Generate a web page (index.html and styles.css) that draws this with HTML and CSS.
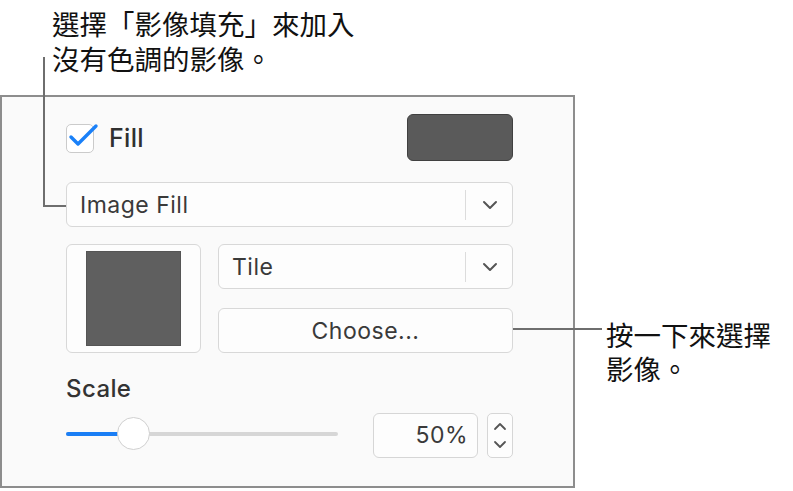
FILE: index.html
```html
<!DOCTYPE html>
<html lang="zh-Hant">
<head>
  <meta charset="UTF-8" />
  <meta name="viewport" content="width=device-width, initial-scale=1.0"/>
  <title>影像填充</title>
  <link rel="stylesheet" href="styles.css">
</head>
<body>
  <div class="figure">
    <p class="callout callout-top">選擇「影像填充」來加入<br>沒有色調的影像。</p>

    <div class="row">
      <div class="inspector">
        <div class="fill-row">
          <label class="check">
            <span class="check-box">
              <svg class="check-mark" width="34" height="26" viewBox="0 0 34 26">
                <path d="M5 14 L12 21 L30 3" fill="none" stroke="#1a80f8" stroke-width="3.4" stroke-linecap="round" stroke-linejoin="round"/>
              </svg>
            </span>
            <span class="check-label">Fill</span>
          </label>
          <div class="color-well"></div>
        </div>

        <div class="popup popup-wide">
          <span class="popup-text">Image Fill</span>
          <span class="popup-arrow">
            <svg width="16" height="10" viewBox="0 0 16 10"><path d="M2 2 L8 8 L14 2" fill="none" stroke="#555" stroke-width="2" stroke-linecap="round" stroke-linejoin="round"/></svg>
          </span>
        </div>

        <div class="media-row">
          <div class="image-well"><div class="image-swatch"></div></div>
          <div class="media-controls">
            <div class="popup">
              <span class="popup-text">Tile</span>
              <span class="popup-arrow">
                <svg width="16" height="10" viewBox="0 0 16 10"><path d="M2 2 L8 8 L14 2" fill="none" stroke="#555" stroke-width="2" stroke-linecap="round" stroke-linejoin="round"/></svg>
              </span>
            </div>
            <div class="button">Choose...</div>
          </div>
        </div>

        <div class="scale-label">Scale</div>
        <div class="scale-row">
          <div class="slider">
            <div class="slider-track"></div>
            <div class="slider-fill"></div>
            <div class="slider-knob"></div>
          </div>
          <div class="number-field">50%</div>
          <div class="stepper">
            <svg width="14" height="9" viewBox="0 0 14 9"><path d="M2 7 L7 2 L12 7" fill="none" stroke="#555" stroke-width="1.8" stroke-linecap="round" stroke-linejoin="round"/></svg>
            <svg width="14" height="9" viewBox="0 0 14 9"><path d="M2 2 L7 7 L12 2" fill="none" stroke="#555" stroke-width="1.8" stroke-linecap="round" stroke-linejoin="round"/></svg>
          </div>
        </div>
      </div>

      <p class="callout callout-side">按一下來選擇<br>影像。</p>
    </div>

    <!-- leader lines -->
    <div class="leader leader-top-v"></div>
    <div class="leader leader-top-h"></div>
    <div class="leader leader-side"></div>
  </div>
</body>
</html>
```

FILE: styles.css
```css
body {
  margin: 0;
  background: #fff;
  font-family: Inter, "Noto Sans CJK TC", sans-serif;
  color: #111;
}
.figure {
  position: relative;
  width: 793px;
  height: 491px;
}
.callout {
  margin: 0;
  font-family: "Noto Sans CJK TC", sans-serif;
  font-size: 27.5px;
  line-height: 35px;
  color: #111;
}
.callout-top {
  padding: 6px 0 0 52px;
  height: 95px;
  box-sizing: border-box;
}
.row {
  display: flex;
  align-items: flex-start;
}
.inspector {
  box-sizing: border-box;
  width: 575px;
  height: 393px;
  background: #fafafa;
  border: 2px solid #8d8d8d;
  padding: 17px 60px 0 64px;
}
.callout-side {
  margin: 222px 0 0 31px;
  line-height: 34px;
}

/* fill row */
.fill-row {
  display: flex;
  justify-content: space-between;
  align-items: center;
  height: 47px;
}
.check {
  display: flex;
  align-items: center;
}
.check-box {
  position: relative;
  box-sizing: border-box;
  width: 28px;
  height: 29px;
  background: #fff;
  border: 1.5px solid #cbcbcb;
  border-radius: 5px;
  margin-top: 1px;
}
.check-mark {
  position: absolute;
  left: -1.5px;
  top: -1.5px;
  overflow: visible;
}
.check-label {
  margin-left: 15px;
  font-size: 25px;
  font-weight: 500;
  letter-spacing: 0.3px;
  color: #303030;
}
.color-well {
  box-sizing: border-box;
  width: 106px;
  height: 47px;
  border-radius: 6px;
  border: 1px solid #404040;
  background: #5a5a5a;
}

/* popups and buttons */
.popup,
.button {
  box-sizing: border-box;
  height: 45px;
  background: #fdfdfd;
  border: 1.5px solid #d8d8d8;
  border-radius: 6px;
  font-size: 23px;
  letter-spacing: 0.5px;
  color: #3a3a3a;
}
.popup {
  display: flex;
  align-items: center;
}
.popup-wide {
  margin-top: 21px;
}
.popup-text {
  flex: 1;
  padding-left: 13px;
}
.popup-arrow {
  display: flex;
  align-items: center;
  justify-content: center;
  width: 46px;
  height: 30px;
  border-left: 1.5px solid #dcdcdc;
}
.popup-arrow svg {
  margin-left: 2px;
}
.button {
  display: flex;
  align-items: center;
  justify-content: center;
}

/* image row */
.media-row {
  display: flex;
  margin-top: 17px;
  gap: 17px;
}
.image-well {
  box-sizing: border-box;
  width: 135px;
  height: 109px;
  border: 1.5px solid #d8d8d8;
  border-radius: 6px;
  background: #fdfdfd;
  padding: 6px 0 0 18.5px;
}
.image-swatch {
  width: 95px;
  height: 95px;
  background: #5f5f5f;
  box-shadow: inset 0 0 0 1px #555;
}
.media-controls {
  flex: 1;
  display: flex;
  flex-direction: column;
  gap: 19px;
}

/* scale */
.scale-label {
  margin-top: 22px;
  font-size: 24px;
  font-weight: 500;
  letter-spacing: 0.4px;
  line-height: 28px;
  color: #333;
}
.scale-row {
  display: flex;
  align-items: center;
  margin-top: 10px;
  height: 45px;
}
.slider {
  position: relative;
  width: 272px;
  height: 45px;
  margin-right: auto;
}
.slider-track,
.slider-fill {
  position: absolute;
  left: 0;
  top: 19px;
  height: 4px;
  border-radius: 2px;
}
.slider-track {
  width: 272px;
  background: #d6d6d6;
}
.slider-fill {
  width: 60px;
  background: #1a7ef5;
}
.slider-knob {
  position: absolute;
  left: 51px;
  top: 4px;
  box-sizing: border-box;
  width: 33px;
  height: 33px;
  border-radius: 50%;
  background: #fff;
  border: 1.5px solid #d0d0d0;
}
.number-field {
  box-sizing: border-box;
  width: 105px;
  height: 45px;
  border: 1.5px solid #d6d6d6;
  border-radius: 6px;
  background: #fdfdfd;
  font-size: 23px;
  letter-spacing: 0.5px;
  color: #3a3a3a;
  text-align: right;
  padding-right: 9px;
  line-height: 42px;
}
.stepper {
  box-sizing: border-box;
  width: 26px;
  height: 45px;
  margin-left: 9px;
  border: 1.5px solid #d6d6d6;
  border-radius: 5px;
  background: #fdfdfd;
  display: flex;
  flex-direction: column;
  align-items: center;
  justify-content: center;
  gap: 9px;
}

/* leader lines */
.leader {
  position: absolute;
  background: #6e6e6e;
}
.leader-top-v {
  left: 43px;
  top: 57px;
  width: 2px;
  height: 150px;
}
.leader-top-h {
  left: 43px;
  top: 205px;
  width: 23px;
  height: 2px;
}
.leader-side {
  left: 513px;
  top: 328px;
  width: 89px;
  height: 2px;
}
```
